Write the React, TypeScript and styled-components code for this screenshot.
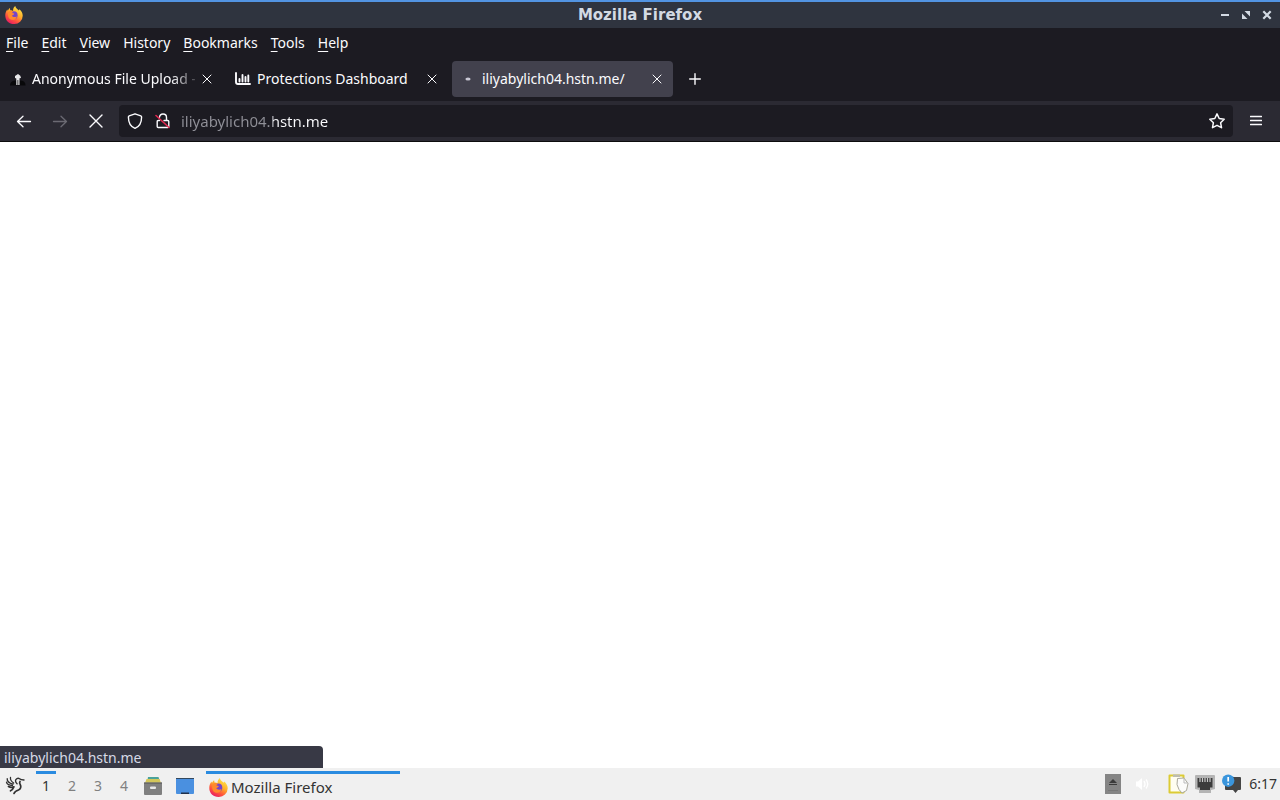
import React from "react";
import styled, { createGlobalStyle } from "styled-components";

const Global = createGlobalStyle`
  * { box-sizing: border-box; }
  html, body { margin: 0; background: #fff; }
  body { font-family: "Noto Sans", "Open Sans", sans-serif; font-size: 14px; line-height: 20px; }
  button, input { font: inherit; color: inherit; border: 0; background: none; padding: 0; margin: 0; outline: 0; }
  svg { display: block; flex: none; }
`;

const Desktop = styled.div`
  display: flex;
  flex-direction: column;
  min-height: 100vh;
`;

const TitleBar = styled.header`
  display: grid;
  grid-template-columns: 1fr auto 1fr;
  align-items: center;
  height: 28px;
  padding: 0 5px;
  border-top: 2px solid #5294e2;
  background: #2f343f;
  color: #d3dae3;
`;

const WindowTitle = styled.h1`
  margin: 0;
  font-family: "DejaVu Sans", sans-serif;
  font-size: 15px;
  line-height: 20px;
  font-weight: 700;
`;

const WindowControls = styled.div`
  display: flex;
  justify-content: flex-end;
  gap: 5px;
`;

const ControlButton = styled.button`
  display: grid;
  place-items: center;
  width: 16px;
  height: 20px;
`;

const MenuBar = styled.nav`
  display: flex;
  align-items: center;
  gap: 1px;
  height: 30px;
  background: #1c1b22;
  color: #fbfbfe;
`;

const MenuButton = styled.button`
  padding: 0 6px;
  white-space: nowrap;
  u { text-underline-offset: 3px; text-decoration-thickness: 1px; }
`;

const TabStrip = styled.div`
  display: flex;
  align-items: flex-start;
  gap: 4px;
  height: 43px;
  padding: 3px 2px 0;
  background: #1c1b22;
  color: #fbfbfe;
`;

const Tab = styled.div<{ $active?: boolean }>`
  display: flex;
  align-items: center;
  width: 221px;
  height: 36px;
  padding: 0 8px;
  border-radius: 4px;
  background: ${(p) => (p.$active ? "#42414d" : "transparent")};
`;

const TabLabel = styled.button<{ $faded?: boolean }>`
  display: flex;
  align-items: center;
  flex: 1;
  min-width: 0;
  gap: 6px;
  white-space: nowrap;
  text-align: left;
  mask-image: ${(p) =>
    p.$faded ? "linear-gradient(to left, rgba(0, 0, 0, 0.2), #000 24px)" : "none"};
`;

const TabClose = styled.button`
  display: grid;
  place-items: center;
  width: 24px;
  height: 24px;
  margin-right: -4px;
`;

const NewTab = styled.button`
  display: grid;
  place-items: center;
  width: 36px;
  height: 36px;
`;

const NavBar = styled.div`
  display: flex;
  align-items: center;
  height: 41px;
  padding: 0 6px;
  border-bottom: 1px solid #0c0c0d;
  background: #2b2a33;
  color: #fbfbfe;
`;

const NavButton = styled.button`
  display: grid;
  place-items: center;
  width: 36px;
  height: 32px;
  &:disabled { color: #6b6a73; }
`;

const AddressBar = styled.div`
  display: flex;
  align-items: center;
  flex: 1;
  height: 32px;
  margin: 0 5px;
  padding: 0 2px;
  border-radius: 4px;
  background: #1c1b22;
`;

const AddressButton = styled.button`
  display: grid;
  place-items: center;
  width: 28px;
  height: 28px;
`;

const AddressInput = styled.input`
  flex: 1;
  min-width: 0;
  height: 28px;
  margin-left: 4px;
  font-size: 15px;
  background: linear-gradient(90deg, #8f8f97 92px, #fbfbfe 92px);
  background-clip: text;
  -webkit-background-clip: text;
  -webkit-text-fill-color: transparent;
`;

const Page = styled.main`
  display: flex;
  align-items: flex-end;
  flex: 1;
  background: #fff;
`;

const Status = styled.div`
  width: 323px;
  height: 22px;
  padding: 2px 4px 0;
  border-radius: 0 4px 0 0;
  background: #383945;
  color: #d6dae6;
`;

const Taskbar = styled.footer`
  display: flex;
  align-items: stretch;
  height: 32px;
  background: #f0f0f0;
  color: #333;
`;

const Launcher = styled.button`
  display: grid;
  place-items: center;
  width: 32px;
  padding-top: 4px;
`;

const MenuLauncher = styled(Launcher)`
  width: 30px;
  margin-right: 3px;
`;

const Workspace = styled.button<{ $active?: boolean }>`
  width: 26px;
  padding-top: 4px;
  color: ${(p) => (p.$active ? "#333" : "#808080")};
  background: ${(p) =>
    p.$active ? "linear-gradient(#2a8be0, #2a8be0) center 3px / 20px 3px no-repeat" : "none"};
`;

const Task = styled.button`
  display: flex;
  align-items: center;
  gap: 3px;
  width: 194px;
  height: 29px;
  margin: 3px 0 0 5px;
  padding-left: 3px;
  border-top: 3px solid #2a8be0;
  font-size: 15px;
`;

const Tray = styled.div`
  display: flex;
  align-items: center;
  gap: 7px;
  margin-left: auto;
  padding-right: 3px;
`;

const TrayButton = styled.button`
  display: grid;
  place-items: center;
  width: 20px;
  height: 24px;
`;

const VolumeButton = styled(TrayButton)`
  margin: 0 8px 0 3px;
`;

const Clock = styled.time`
  font-size: 14px;
`;

const FirefoxLogo = ({ id, size }: { id: string; size: number }) => (
  <svg width={size} height={size} viewBox="0 0 20 20" aria-hidden="true">
    <defs>
      <linearGradient id={id} x1=".8" y1=".05" x2=".25" y2="1">
        <stop offset="0" stopColor="#ffe84a" />
        <stop offset=".4" stopColor="#ffae2a" />
        <stop offset=".7" stopColor="#ff553d" />
        <stop offset="1" stopColor="#e51667" />
      </linearGradient>
    </defs>
    <path fill={`url(#${id})`} d="M11.500 0c.2 2 1.500 2.900 2.700 3.900l1.300 1.100.4-1.400c2.200 1.700 3.800 4.200 3.800 7.200A9.500 9.300 0 0 1 10 20C4.500 20 .3 16 .3 10.500c0-2.600.8-4.700 2.300-6.700l.5 1.400C3.800 4.200 4.300 3 5.400 2.300l.4 2.500c1.400-.1 2.400 0 3.200.7C8.800 3.100 9.800 1.200 11.500 0Z" />
    <circle cx="9.700" cy="10.200" r="4.300" fill="#7545c9" />
    <path fill="#ff8a2c" d="M3.400 7.500c1.500-2.800 4.600-2.700 6.100-1.200-1 .2-1.500.8-1.600 1.500l2.400.5c-.2 1.300-1.400 1.700-2.700 2.200 1 2.200 4 2.300 5.600.8-.5 3-3 4.700-5.600 4.100C4.500 15 2.800 11.500 3.400 7.500Z" />
  </svg>
);

const CrossIcon = ({ size = 10, stroke = 1 }: { size?: number; stroke?: number }) => (
  <svg width={size} height={size} viewBox={`0 0 ${size} ${size}`} aria-hidden="true">
    <path d={`M1 1L${size - 1} ${size - 1}M${size - 1} 1L1 ${size - 1}`} stroke="currentColor" strokeWidth={stroke} strokeLinecap="round" />
  </svg>
);

const ArrowIcon = ({ flip }: { flip?: boolean }) => (
  <svg width="16" height="16" viewBox="0 0 16 16" fill="none" stroke="currentColor" strokeWidth="1.300" strokeLinecap="round" strokeLinejoin="round" aria-hidden="true">
    <path d={flip ? "M1.500 8.500h13M9 3.200l5.500 5.300L9 13.800" : "M14.500 8.500h-13M7 3.200 1.500 8.500 7 13.800"} />
  </svg>
);

const menus: [string, string, string][] = [
  ["", "F", "ile"],
  ["", "E", "dit"],
  ["", "V", "iew"],
  ["Hi", "s", "tory"],
  ["", "B", "ookmarks"],
  ["", "T", "ools"],
  ["", "H", "elp"],
];

export default function App() {
  return (
    <Desktop>
      <Global />
      <TitleBar>
        <FirefoxLogo id="fxTitle" size={18} />
        <WindowTitle>Mozilla Firefox</WindowTitle>
        <WindowControls>
          <ControlButton aria-label="Minimize">
            <svg width="8" height="8" viewBox="0 0 8 8"><path d="M0 3h8v2H0z" fill="currentColor" /></svg>
          </ControlButton>
          <ControlButton aria-label="Restore">
            <svg width="8" height="8" viewBox="0 0 8 8"><path d="M2.500 0H8v5.500zM0 2.500 5.500 8H0z" fill="currentColor" /></svg>
          </ControlButton>
          <ControlButton aria-label="Close window">
            <svg width="10" height="10" viewBox="0 0 10 10"><path d="m1.300 1.300 7.400 7.400m0-7.400L1.300 8.700" stroke="currentColor" strokeWidth="2.200" /></svg>
          </ControlButton>
        </WindowControls>
      </TitleBar>

      <MenuBar aria-label="Application menu">
        {menus.map(([before, key, after]) => (
          <MenuButton key={before + key + after}>{before}<u>{key}</u>{after}</MenuButton>
        ))}
      </MenuBar>

      <TabStrip>
        <Tab>
          <TabLabel $faded>
            <svg width="16" height="16" viewBox="0 0 16 16" aria-hidden="true">
              <path d="M0 14.500c0-3 2-4.500 5-5h6c3 .5 4.500 2 4.500 5z" fill="#08080a" />
              <path d="M5 5 8 3l2.300 1.800L11 7l-1.500.2V14H8.300V9H7.500v5H6.300V7.500L5 7z" fill="#e8e8ea" />
            </svg>
            <span>Anonymous File Upload -</span>
          </TabLabel>
          <TabClose aria-label="Close tab"><CrossIcon /></TabClose>
        </Tab>
        <Tab>
          <TabLabel>
            <svg width="16" height="16" viewBox="0 0 16 16" fill="none" stroke="currentColor" strokeLinecap="round" aria-hidden="true">
              <path d="M1 2v9q0 2 2 2H15" strokeWidth="1.900" />
              <path d="M4.500 8V10.500M7.500 4V10.500M10.500 6V10.500M13.300 4.500V10.500" strokeWidth="1.900" />
            </svg>
            <span>Protections Dashboard</span>
          </TabLabel>
          <TabClose aria-label="Close tab"><CrossIcon /></TabClose>
        </Tab>
        <Tab $active>
          <TabLabel>
            <svg width="16" height="16" viewBox="0 0 16 16" aria-hidden="true">
              <ellipse cx="8" cy="8" rx="2.600" ry="1.500" fill="#c9c8d4" />
            </svg>
            <span>iliyabylich04.hstn.me/</span>
          </TabLabel>
          <TabClose aria-label="Close tab"><CrossIcon /></TabClose>
        </Tab>
        <NewTab aria-label="New tab">
          <svg width="12" height="12" viewBox="0 0 12 12"><path d="M6 .7v10.600M.7 6h10.600" stroke="currentColor" strokeWidth="1.400" strokeLinecap="round" /></svg>
        </NewTab>
      </TabStrip>

      <NavBar>
        <NavButton aria-label="Back"><ArrowIcon /></NavButton>
        <NavButton aria-label="Forward" disabled><ArrowIcon flip /></NavButton>
        <NavButton aria-label="Stop"><CrossIcon size={14} stroke={1.4} /></NavButton>
        <AddressBar>
          <AddressButton aria-label="Tracking protection">
            <svg width="16" height="16" viewBox="0 0 16 16" fill="none" stroke="currentColor" strokeWidth="1.400" strokeLinejoin="round">
              <path d="M8 .8 13.800 2.800c.5.2.8.6.8 1.100C14.600 9 12.500 13.500 8 15.300 3.500 13.500 1.400 9 1.400 3.900c0-.5.3-.9.8-1.100z" />
            </svg>
          </AddressButton>
          <AddressButton aria-label="Connection is not secure">
            <svg width="16" height="16" viewBox="0 0 16 16" fill="none" stroke="currentColor" strokeWidth="1.400" strokeLinecap="round">
              <path d="M4.500 4.300C4.700 2.200 6 1 8 1s3.500 1.300 3.500 3.500V7.500M4.500 7.500H3.200q-1 0-1 1v5q0 1 1 1h9.600q1 0 1-1v-5q0-1-1-1H9" />
              <path d="M1 2.500 14 14.500" stroke="#e22850" strokeWidth="1.600" />
            </svg>
          </AddressButton>
          <AddressInput aria-label="Address" defaultValue="iliyabylich04.hstn.me" spellCheck={false} />
          <AddressButton aria-label="Bookmark this page">
            <svg width="16" height="16" viewBox="0 0 16 16" fill="none" stroke="currentColor" strokeWidth="1.500" strokeLinejoin="round">
              <path d="m8 .9 2.200 4.600 5 .7-3.600 3.500.9 5L8 12.300l-4.500 2.400.9-5L.8 6.200l5-.7z" />
            </svg>
          </AddressButton>
        </AddressBar>
        <NavButton aria-label="Open application menu">
          <svg width="12" height="12" viewBox="0 0 12 12"><path d="M.5 1.500h11M.5 5.500h11M.5 9.500h11" stroke="currentColor" strokeWidth="1.300" strokeLinecap="round" /></svg>
        </NavButton>
      </NavBar>

      <Page>
        <Status role="status">iliyabylich04.hstn.me</Status>
      </Page>

      <Taskbar>
        <MenuLauncher aria-label="Start menu">
          <svg width="20" height="20" viewBox="0 0 20 20" fill="none" stroke="#303030" strokeLinecap="round" strokeLinejoin="round">
            <path d="M5.500 1.500c-.5 2.500 1 4 3.200 5.500M2.200 2.700C2 5.200 4 7 8 8.200M1.500 6.200c.5 2.300 2.500 3.300 6 3.300" strokeWidth="1.300" />
            <path d="M19 4c-2.500 0-3.500-.3-4.500-1.200-1.500-1.200-4-.2-4 2 0 1.800 1 2.500 1.600 3" strokeWidth="1.400" />
            <path d="M15 5.500c-.8 1.200-.5 2 .2 3 1.300 2.200.4 4.800-1.700 5.500-2.500.8-3.700 1.200-4.500 3.500M3.500 10.500c2 1.200 3.500 1.200 5.500.3-.8 2.200-1.500 3-3.500 4" strokeWidth="1.700" />
          </svg>
        </MenuLauncher>
        <Workspace $active>1</Workspace>
        <Workspace>2</Workspace>
        <Workspace>3</Workspace>
        <Workspace>4</Workspace>
        <Launcher aria-label="File manager">
          <svg width="18" height="18" viewBox="0 0 18 18">
            <path d="M4 0h10.500l1 3h-12z" fill="#4aa39a" /><path d="M2.500 2h13L17 6H1z" fill="#d3c65a" />
            <path d="M0 5.500h18V17q0 1-1 1H1q-1 0-1-1z" fill="#7f7f7f" /><path d="M0 5.500h18V7H0z" fill="#6a6a6a" />
            <rect x="6" y="9.500" width="6" height="2.500" rx="1" fill="#e8e8e8" />
          </svg>
        </Launcher>
        <Launcher aria-label="Show desktop">
          <svg width="18" height="18" viewBox="0 0 18 18">
            <rect y="1" width="18" height="16" rx="1" fill="#4a90e0" /><path d="M0 1h18v1H0z" fill="#34495e" /><path d="M5 15.500h8V17H5z" fill="#20304a" />
          </svg>
        </Launcher>
        <Task><FirefoxLogo id="fxTask" size={19} /><span>Mozilla Firefox</span></Task>
        <Tray>
          <TrayButton aria-label="Removable media">
            <svg width="16" height="20" viewBox="0 0 16 20">
              <path d="M0 0h16v20H0z" fill="#858585" />
              <path d="M8 5 12 9H4zM4 10h8v1H4z" fill="#3a3a3a" />
              <path d="M3 16.500h10" stroke="#777" />
            </svg>
          </TrayButton>
          <VolumeButton aria-label="Volume">
            <svg width="16" height="16" viewBox="0 0 16 16" fill="none" stroke="#fff" strokeWidth="1.300">
              <path d="M1 5.500h2L7 2v12l-4-3.500H1z" fill="#fff" stroke="none" />
              <path d="M9 5q2 3 0 6" /><path d="M11 3.500q3.500 4.500 0 9" />
            </svg>
          </VolumeButton>
          <TrayButton aria-label="Clipboard">
            <svg width="21" height="22" viewBox="0 0 21 22" strokeLinejoin="round">
              <path d="M1.500 2.500h14v17h-14z" fill="#fffef0" stroke="#dccb35" strokeWidth="2" />
              <path d="M5 1.500h7v2.500H5z" fill="#bdbdb0" />
              <path d="M9.500 5.500 16 5l4 5.500-1.500 7-4.500 2.500-3-3.500-2-5z" fill="#fcfcfa" stroke="#aaa99c" />
              <path d="M16 5v5h4" fill="none" stroke="#bbb" />
            </svg>
          </TrayButton>
          <TrayButton aria-label="Network">
            <svg width="20" height="20" viewBox="0 0 20 20">
              <path d="M1 1h18q1 0 1 1v13l-4 1v3H4v-3l-4-1V2q0-1 1-1z" fill="#b4b4b4" />
              <path d="M2.500 4h15v9.500H15V16H5v-2.500H2.500z" fill="#3c3c3c" />
              <path d="M5 4v4M7.500 4v4M10 4v4M12.500 4v4M15 4v4" stroke="#c8c8c8" strokeWidth="1.200" />
            </svg>
          </TrayButton>
          <TrayButton aria-label="Notifications">
            <svg width="20" height="20" viewBox="0 0 20 20">
              <path d="M4 3h14q1 0 1 1v11q0 1-1 1h-2l-2.500 3L11 16H4q-1 0-1-1V4q0-1 1-1z" fill="#454545" />
              <circle cx="6.200" cy="6.700" r="6.200" fill="#3a95dc" />
              <path d="M6.200 3v4.500M6.200 9.200v1.600" stroke="#fff" strokeWidth="1.700" />
            </svg>
          </TrayButton>
          <Clock dateTime="06:17">6:17</Clock>
        </Tray>
      </Taskbar>
    </Desktop>
  );
}
